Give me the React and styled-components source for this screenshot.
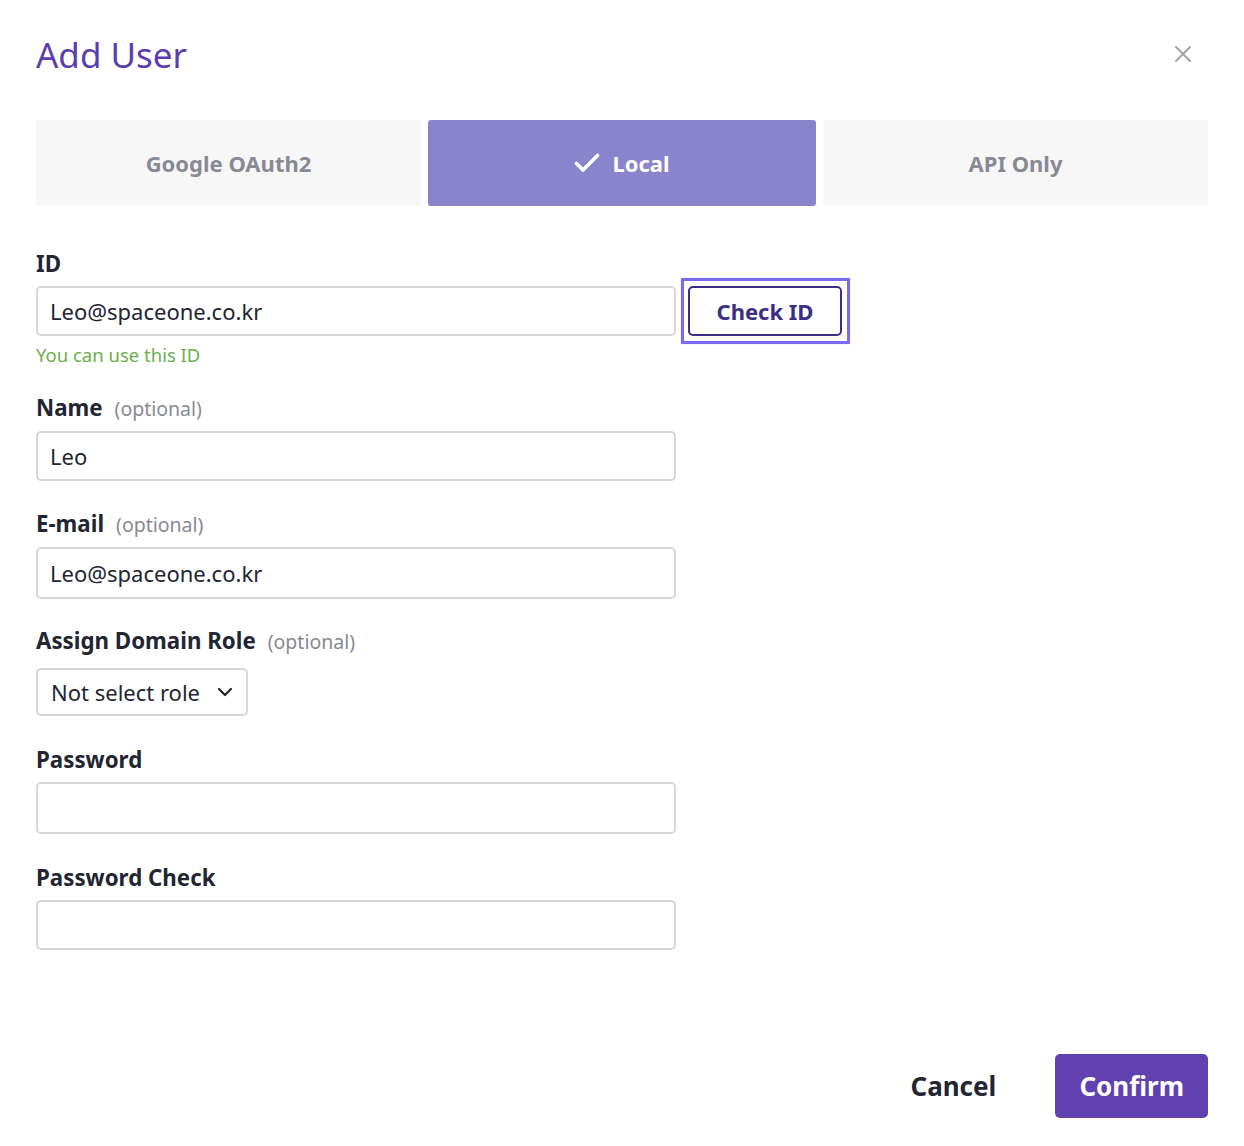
import React from "react";
import styled, { createGlobalStyle } from "styled-components";

const GlobalStyle = createGlobalStyle`
  html, body {
    margin: 0;
    padding: 0;
    background: #ffffff;
    font-family: "Noto Sans", "Open Sans", sans-serif;
    color: #222532;
  }
  * { box-sizing: border-box; }
`;

const Page = styled.div`
  padding: 32px 36px 28px;
  display: flex;
  flex-direction: column;
`;

const Header = styled.div`
  display: flex;
  align-items: center;
  justify-content: space-between;
  margin-bottom: 44px;
`;

const Title = styled.h1`
  margin: 0;
  font-size: 35px;
  line-height: 44px;
  font-weight: 400;
  color: #5b3db1;
  transform: translateY(1px);
`;

const CloseButton = styled.button`
  border: 0;
  background: none;
  padding: 0;
  margin-right: 9px;
  width: 32px;
  height: 32px;
  display: flex;
  align-items: center;
  justify-content: center;
  cursor: pointer;
`;

const Tabs = styled.div`
  display: grid;
  grid-template-columns: 385px 388px 1fr;
  gap: 7px;
  margin-bottom: 43px;
`;

const Tab = styled.button`
  height: 86px;
  border: 0;
  border-radius: 3px;
  font-family: inherit;
  font-size: 22px;
  font-weight: 700;
  display: flex;
  align-items: center;
  justify-content: center;
  gap: 12px;
  background: ${(p) => (p.$active ? "#8a84cc" : "#f7f7f7")};
  color: ${(p) => (p.$active ? "#ffffff" : "#898995")};
  cursor: pointer;
`;

const Field = styled.div`
  display: flex;
  flex-direction: column;
  margin-bottom: ${(p) => p.$gap ?? 28}px;
`;

const Label = styled.label`
  font-size: 22.3px;
  font-weight: 700;
  line-height: 30px;
  margin-bottom: ${(p) => p.$gap ?? 7}px;
  display: flex;
  align-items: baseline;
  gap: 12px;
`;

const Optional = styled.span`
  font-size: 19.5px;
  font-weight: 400;
  color: #898995;
`;

const Row = styled.div`
  display: flex;
  align-items: center;
  gap: 12px;
`;

const Input = styled.input`
  width: 640px;
  height: ${(p) => p.$h ?? 50}px;
  border: 2px solid #d6d6dc;
  border-radius: 5px;
  padding: 0 12px;
  font-family: inherit;
  font-size: 22px;
  color: #222532;
  background: #fff;
  outline: none;
`;

const CheckButton = styled.button`
  position: relative;
  width: 154px;
  height: 50px;
  border: 2px solid #3b2e86;
  border-radius: 5px;
  background: #fff;
  color: #3b2e86;
  font-family: inherit;
  font-size: 22px;
  font-weight: 700;
  cursor: pointer;

  &::after {
    content: "";
    position: absolute;
    inset: -10px -10px -10px -9px;
    border: 3px solid rgba(98, 80, 240, 0.85);
    border-radius: 1px;
    box-shadow: 0 0 1px rgba(98, 80, 240, 0.6);
    pointer-events: none;
  }
`;

const Help = styled.div`
  margin-top: 6px;
  font-size: 18.5px;
  line-height: 26px;
  color: #6ab04c;
`;

const Select = styled.button`
  align-self: flex-start;
  width: 212px;
  height: 48px;
  border: 2px solid #d6d6dc;
  border-radius: 5px;
  background: #fff;
  padding: 0 13px 0 13px;
  display: flex;
  align-items: center;
  justify-content: space-between;
  font-family: inherit;
  font-size: 22px;
  color: #222532;
  cursor: pointer;
`;

const Footer = styled.div`
  display: flex;
  justify-content: flex-end;
  align-items: center;
  gap: 26px;
  margin-top: 104px;
`;

const FooterButton = styled.button`
  height: 64px;
  min-width: 152px;
  padding: 0 24px;
  border: 0;
  border-radius: 5px;
  font-family: inherit;
  font-size: 26px;
  font-weight: 700;
  background: ${(p) => (p.$primary ? "#6141b0" : "transparent")};
  color: ${(p) => (p.$primary ? "#ffffff" : "#222532")};
  cursor: pointer;
`;

function CloseIcon() {
  return (
    <svg width="18" height="18" viewBox="0 0 18 18">
      <path d="M2 2 L16 16 M16 2 L2 16" stroke="#a3a3ad" strokeWidth="2" strokeLinecap="round" />
    </svg>
  );
}

function CheckIcon() {
  return (
    <svg width="26" height="20" viewBox="0 0 26 20">
      <path d="M2.5 10.5 L9 17 L23.5 2.5" stroke="#fff" strokeWidth="3.6" fill="none" strokeLinecap="round" strokeLinejoin="round" />
    </svg>
  );
}

function ChevronDown() {
  return (
    <svg width="16" height="10" viewBox="0 0 16 10">
      <path d="M2 2 L8 8 L14 2" stroke="#222532" strokeWidth="2.2" fill="none" strokeLinecap="round" strokeLinejoin="round" />
    </svg>
  );
}

export default function App() {
  return (
    <>
      <GlobalStyle />
      <Page>
        <Header>
          <Title>Add User</Title>
          <CloseButton aria-label="Close">
            <CloseIcon />
          </CloseButton>
        </Header>

        <Tabs>
          <Tab>Google OAuth2</Tab>
          <Tab $active>
            <CheckIcon />
            Local
          </Tab>
          <Tab>API Only</Tab>
        </Tabs>

        <Field $gap={25}>
          <Label>ID</Label>
          <Row>
            <Input defaultValue="Leo@spaceone.co.kr" />
            <CheckButton>Check ID</CheckButton>
          </Row>
          <Help>You can use this ID</Help>
        </Field>

        <Field>
          <Label>
            Name <Optional>(optional)</Optional>
          </Label>
          <Input defaultValue="Leo" />
        </Field>

        <Field $gap={27}>
          <Label>
            E-mail <Optional>(optional)</Optional>
          </Label>
          <Input defaultValue="Leo@spaceone.co.kr" $h={52} />
        </Field>

        <Field $gap={29}>
          <Label $gap={11}>
            Assign Domain Role <Optional>(optional)</Optional>
          </Label>
          <Select>
            Not select role
            <ChevronDown />
          </Select>
        </Field>

        <Field $gap={29}>
          <Label>Password</Label>
          <Input type="password" $h={52} />
        </Field>

        <Field $gap={0}>
          <Label>Password Check</Label>
          <Input type="password" />
        </Field>

        <Footer>
          <FooterButton>Cancel</FooterButton>
          <FooterButton $primary>Confirm</FooterButton>
        </Footer>
      </Page>
    </>
  );
}
